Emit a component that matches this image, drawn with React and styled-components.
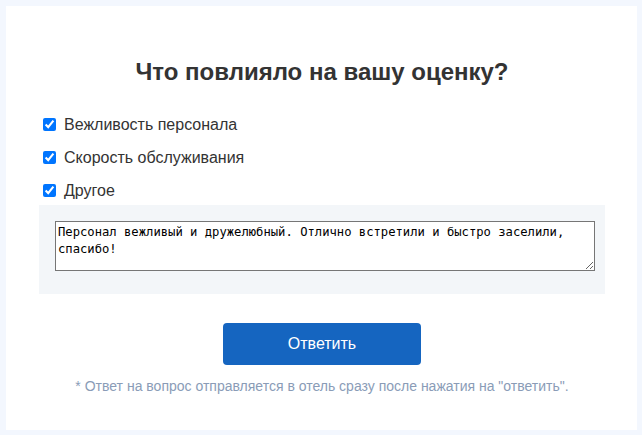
import React, { useState } from 'react';
import styled, { createGlobalStyle } from 'styled-components';

const GlobalStyle = createGlobalStyle`
  html, body {
    margin: 0;
    padding: 0;
    background: #f3f7fe;
  }
  body {
    padding: 6px 5px 5px 6px;
    font-family: "Liberation Sans", Arial, sans-serif;
  }
`;

const Card = styled.div`
  background: #ffffff;
  height: 424px;
  box-sizing: border-box;
  padding: 40px 32px 0 33px;
`;

const Title = styled.h2`
  margin: 0 0 17px;
  text-align: center;
  font-size: 24px;
  font-weight: bold;
  color: #333333;
  line-height: 52px;
`;

const Options = styled.div`
  display: flex;
  flex-direction: column;
  gap: 14px;
`;

const Option = styled.label`
  display: flex;
  align-items: center;
  height: 19px;
  font-size: 16px;
  color: #333333;

  input {
    width: 13px;
    height: 13px;
    margin: 0 8px 0 4px;
  }
`;

const Other = styled.div`
  margin-top: 5px;
  background: #f3f6f9;
  padding: 16px 10px 23px 16px;
`;

const Comment = styled.textarea`
  display: block;
  box-sizing: border-box;
  width: 540px;
  height: 50px;
  padding: 2px;
  border: 1px solid #767676;
  font-family: "DejaVu Sans Mono", monospace;
  font-size: 12.2px;
  line-height: 17px;
  color: #000;
`;

const Actions = styled.div`
  display: flex;
  flex-direction: column;
  align-items: center;
  margin-top: 29px;
`;

const Submit = styled.button`
  width: 198px;
  height: 42px;
  border: none;
  border-radius: 4px;
  background: #1565c0;
  color: #ffffff;
  font-family: "Liberation Sans", Arial, sans-serif;
  font-size: 16px;
  cursor: pointer;
`;

const Note = styled.p`
  margin: 13px 0 0;
  font-size: 14px;
  color: #8a9cb7;
`;

const options = ['Вежливость персонала', 'Скорость обслуживания', 'Другое'];

export default function App() {
  const [checked, setChecked] = useState([true, true, true]);
  const [text, setText] = useState(
    'Персонал вежливый и дружелюбный. Отлично встретили и быстро заселили, спасибо!'
  );

  const toggle = i => {
    setChecked(checked.map((c, idx) => (idx === i ? !c : c)));
  };

  return (
    <>
      <GlobalStyle />
      <Card>
        <Title>Что повлияло на вашу оценку?</Title>
        <Options>
          {options.map((label, i) => (
            <Option key={label}>
              <input type="checkbox" checked={checked[i]} onChange={() => toggle(i)} />
              {label}
            </Option>
          ))}
        </Options>
        {checked[2] && (
          <Other>
            <Comment value={text} onChange={e => setText(e.target.value)} />
          </Other>
        )}
        <Actions>
          <Submit>Ответить</Submit>
          <Note>* Ответ на вопрос отправляется в отель сразу после нажатия на "ответить".</Note>
        </Actions>
      </Card>
    </>
  );
}
